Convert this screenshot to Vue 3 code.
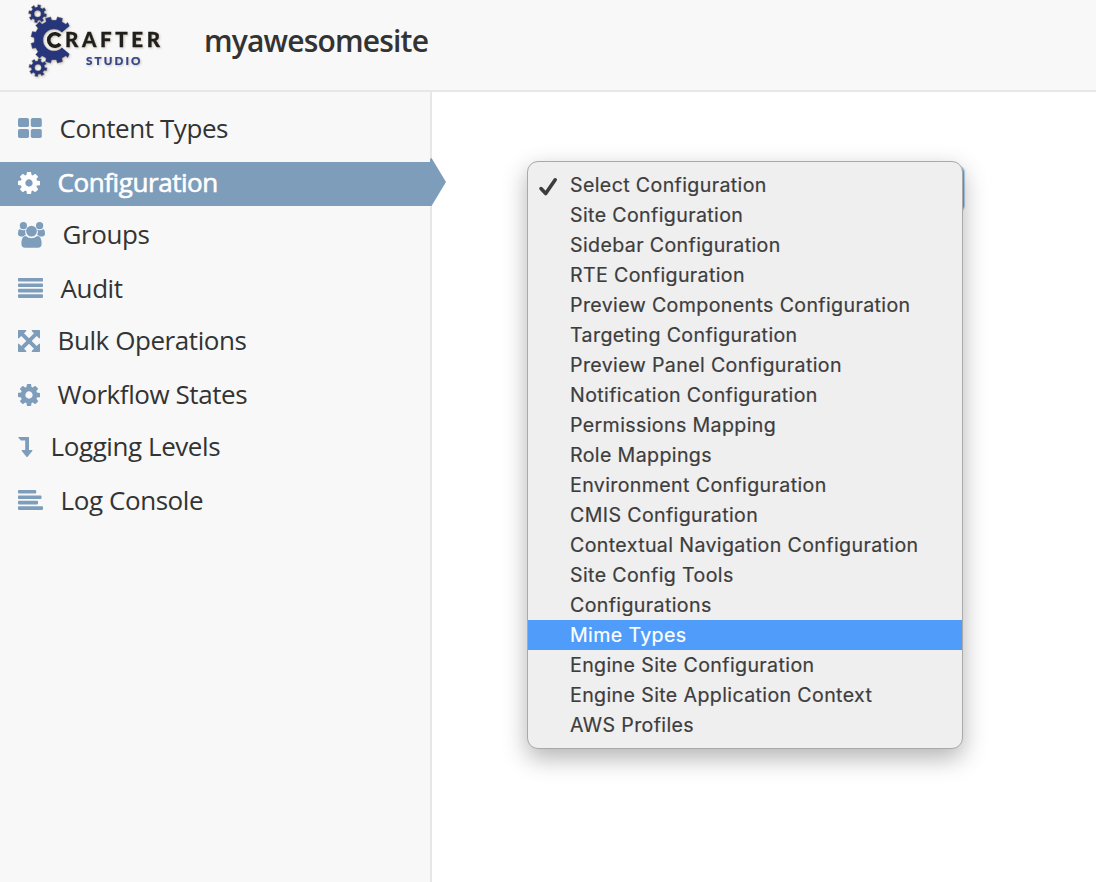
<script setup>
const nav = [
  { label: 'Content Types', icon: 'grid' },
  { label: 'Configuration', icon: 'cog', active: true },
  { label: 'Groups', icon: 'users' },
  { label: 'Audit', icon: 'lines' },
  { label: 'Bulk Operations', icon: 'arrows' },
  { label: 'Workflow States', icon: 'cog' },
  { label: 'Logging Levels', icon: 'down' },
  { label: 'Log Console', icon: 'left' }
]

const options = [
  'Select Configuration', 'Site Configuration', 'Sidebar Configuration', 'RTE Configuration',
  'Preview Components Configuration', 'Targeting Configuration', 'Preview Panel Configuration',
  'Notification Configuration', 'Permissions Mapping', 'Role Mappings', 'Environment Configuration',
  'CMIS Configuration', 'Contextual Navigation Configuration', 'Site Config Tools', 'Configurations',
  'Mime Types', 'Engine Site Configuration', 'Engine Site Application Context', 'AWS Profiles'
]

const cog = 'M1024 640q0-106-75-181t-181-75-181 75-75 181 75 181 181 75 181-75 75-181zm512-109v222q0 12-8 23t-20 13l-185 28q-19 54-39 91 35 50 107 138 10 12 10 25t-9 23q-27 37-99 108t-94 71q-12 0-26-9l-138-108q-44 23-91 38-16 136-29 186-7 28-36 28h-222q-14 0-24.5-8.5t-11.5-21.5l-28-184q-49-16-90-37l-141 107q-10 9-25 9-14 0-25-11-126-114-165-168-7-10-7-23 0-12 8-23 15-21 51-66.5t54-70.5q-27-50-41-99l-183-27q-13-2-21-12.5t-8-23.5v-222q0-12 8-23t19-13l186-28q14-46 39-92-40-57-107-138-10-12-10-24 0-10 9-23 26-36 98.5-107.5t94.5-71.5q13 0 26 10l138 107q44-23 91-38 16-136 29-186 7-28 36-28h222q14 0 24.5 8.5t11.5 21.5l28 184q49 16 90 37l142-107q9-9 24-9 13 0 25 10 129 119 165 170 7 8 7 22 0 12-8 23-15 21-51 66.5t-54 70.5q26 50 41 98l183 28q13 2 21 12.5t8 23.5z'

function gear(cx, cy, outer, inner, teeth, start, hole) {
  const step = (Math.PI * 2) / teeth
  const pts = []
  for (let i = 0; i < teeth; i++) {
    const a = start + i * step
    for (const [r, f] of [[inner, -0.29], [outer, -0.23], [outer, 0.23], [inner, 0.29]]) {
      pts.push(`${(cx + r * Math.cos(a + f * step)).toFixed(2)} ${(cy + r * Math.sin(a + f * step)).toFixed(2)}`)
    }
  }
  return `M${pts.join('L')}Z M${cx - hole} ${cy}a${hole} ${hole} 0 1 0 ${hole * 2} 0a${hole} ${hole} 0 1 0 ${-hole * 2} 0Z`
}
const gears = [
  gear(37.6, 13.8, 9.2, 6.9, 8, 0.2, 3.2),
  gear(38, 67.6, 9.2, 6.9, 8, 0.2, 3.2)
]
const bigGear = gear(54, 40, 23.4, 20, 12, Math.PI / 12, 10.8)
</script>

<template>
  <div class="page">
    <header class="header">
      <svg class="logo" width="180" height="88" viewBox="0 0 180 88">
        <defs>
          <clipPath id="opening"><path d="M28 14H64L69.5 26L60 34V46L69.5 54L64 66H28Z" /></clipPath>
        </defs>
        <g class="glow">
          <path v-for="g in gears" :key="g" :d="g" class="navy" fill-rule="evenodd" />
          <g clip-path="url(#opening)"><path :d="bigGear" class="navy" fill-rule="evenodd" /></g>
          <path class="letter-c" d="M60 36.2A6.3 6.3 0 1 0 60 43.8" />
          <text class="brand" x="65" y="47.2" textLength="95">RAFTER</text>
          <text class="studio" x="86" y="64.6" textLength="54.5">STUDIO</text>
        </g>
      </svg>
      <h1 class="site">myawesomesite</h1>
    </header>

    <div class="body">
      <nav class="sidebar">
        <a v-for="item in nav" :key="item.label" class="item" :class="{ active: item.active }">
          <svg v-if="item.icon === 'grid'" class="icon raised" width="24" height="22" viewBox="0 0 24 22">
            <rect x="0" y="1" width="11" height="9" rx="1.7" /><rect x="12.8" y="1" width="11" height="9" rx="1.7" />
            <rect x="0" y="12" width="11" height="9" rx="1.7" /><rect x="12.8" y="12" width="11" height="9" rx="1.7" />
          </svg>
          <svg v-else-if="item.icon === 'cog'" class="icon" width="22" height="22" viewBox="0 -128 1536 1536"><path :d="cog" /></svg>
          <svg v-else-if="item.icon === 'users'" class="icon" width="27" height="26" viewBox="0 0 27 26">
            <circle cx="5.4" cy="3.7" r="3.6" /><circle cx="21.6" cy="3.7" r="3.6" /><circle cx="13.5" cy="9.1" r="5.4" />
            <path d="M1.7 7.2Q5.2 9 7.6 7.8Q6.3 10.5 7.8 12.9Q6.3 13.2 5.1 14.4H2.7Q0 14.3 0 12.2Q0 7.2 1.7 7.2ZM25.3 7.2Q21.8 9 19.4 7.8Q20.7 10.5 19.2 12.9Q20.7 13.2 21.9 14.4H24.3Q27 14.3 27 12.2Q27 7.2 25.3 7.2Z" />
            <path d="M7.8 14Q13.5 18.4 19.2 14Q23.6 13.8 23.6 22Q23.6 25.7 19.8 25.7H7.2Q3.4 25.7 3.4 22Q3.4 13.8 7.8 14Z" />
          </svg>
          <svg v-else-if="item.icon === 'lines'" class="icon raised" width="25" height="22" viewBox="0 0 25 22">
            <rect x="0" y="1" width="25" height="3.6" rx=".8" /><rect x="0" y="6.4" width="25" height="3.6" rx=".8" />
            <rect x="0" y="11.8" width="25" height="3.6" rx=".8" /><rect x="0" y="17.3" width="25" height="3.6" rx=".8" />
          </svg>
          <svg v-else-if="item.icon === 'arrows'" class="icon" width="22" height="22" viewBox="0 0 22 22">
            <path d="M.7 0H7.8Q8.8.2 8.1 1.2L6 3.3L11 8.3L16 3.3L13.9 1.2Q13.2.2 14.2 0H21.3Q22 0 22 .7V7.8Q21.8 8.8 20.8 8.1L18.7 6L13.7 11L18.7 16L20.8 13.9Q21.8 13.2 22 14.2V21.3Q22 22 21.3 22H14.2Q13.2 21.8 13.9 20.8L16 18.7L11 13.7L6 18.7L8.1 20.8Q8.8 21.8 7.8 22H.7Q0 22 0 21.3V14.2Q.2 13.2 1.2 13.9L3.3 16L8.3 11L3.3 6L1.2 8.1Q.2 8.8 0 7.8V.7Q0 0 .7 0Z" />
          </svg>
          <svg v-else-if="item.icon === 'down'" class="icon" width="15" height="22" viewBox="0 0 15 22">
            <path d="M.5 1H10.5Q11 1 11 1.6V14H13.8Q15 14.2 14.3 15.1L9.6 20.7Q9 21.2 8.4 20.7L3.8 15.1Q3.2 14.2 4.2 14H7.2V4.6H3.2Q2.9 4.6 2.7 4.3L.2 1.6Q0 1 .5 1Z" />
          </svg>
          <svg v-else class="icon raised" width="25" height="22" viewBox="0 0 25 22">
            <rect x="0" y="1" width="18.2" height="3.6" rx=".8" /><rect x="0" y="6.4" width="23.5" height="3.6" rx=".8" />
            <rect x="0" y="11.8" width="20" height="3.6" rx=".8" /><rect x="0" y="17.3" width="25" height="3.6" rx=".8" />
          </svg>
          <span class="label">{{ item.label }}</span>
          <svg v-if="item.active" class="pointer" width="16" height="48" viewBox="0 0 16 48"><path d="M0 48V1L1.5 0L16 24L1.5 48Z" /></svg>
        </a>
      </nav>

      <main class="content">
        <div class="select">
          <ul class="menu">
            <li v-for="(o, i) in options" :key="o" :class="{ hover: o === 'Mime Types' }">
              <svg v-if="i === 0" class="check" width="20" height="20" viewBox="0 0 20 20"><path d="M3 11.6L7.7 16.5L17.2 2.8" /></svg>
              <span>{{ o }}</span>
            </li>
          </ul>
        </div>
      </main>
    </div>
  </div>
</template>

<style>
body { margin: 0; overflow: hidden; }
</style>

<style scoped>
.page { width: 1096px; height: 882px; display: flex; flex-direction: column; background: #fff; font-family: "Open Sans", "Noto Sans", sans-serif; color: #333; overflow: hidden; }
.header { box-sizing: border-box; height: 92px; display: flex; background: #f8f8f8; border-bottom: 2px solid #e7e7e7; }
.logo { flex: none; }
.glow { filter: drop-shadow(1px 1px .8px #cdc7ba); }
.navy { fill: #27367a; stroke: #a69b87; stroke-width: .4; }
.letter-c { fill: none; stroke: #211f1c; stroke-width: 3.6; }
.brand { font: 900 20.5px Lato, sans-serif; fill: #211f1c; stroke: #211f1c; stroke-width: .3; }
.studio { font: 900 11.6px Lato, sans-serif; fill: #36468a; stroke: #36468a; stroke-width: .2; }
.site { margin: 0 0 0 24px; font-size: 30px; line-height: 82px; font-weight: 600; letter-spacing: -.82px; }
.body { flex: 1; display: flex; }
.sidebar { box-sizing: border-box; width: 432px; padding-top: 16px; background: #f8f8f8; border-right: 2px solid #e7e7e7; }
.item { position: relative; display: flex; align-items: center; gap: 18px; box-sizing: border-box; height: 44px; padding: 0 0 2px 18px; margin-bottom: 8px; font-size: 26px; line-height: 40px; letter-spacing: -.43px; }
.item:nth-child(odd) { margin-bottom: 10px; }
.icon { flex: none; fill: #7e9dbb; }
.icon.raised { margin-top: -2px; }
.label { margin: -2px 0 0 -.4px; }
.active { background: #7e9dbb; color: #fff; -webkit-text-stroke: .6px #fff; }
.active .icon { fill: #fff; }
.pointer { position: absolute; left: 430px; top: -4px; fill: #7e9dbb; }
.content { flex: 1; padding: 75px 0 0 98px; }
.select { position: relative; box-sizing: border-box; width: 434px; height: 44px; border: 2px solid #5b9fe3; border-radius: 5px; box-shadow: 0 0 1px 1px #acd0f3; }
.menu { position: absolute; left: -5px; top: -8px; box-sizing: border-box; width: 436px; height: 588px; margin: 0; padding: 8px 0; list-style: none; background: #efefef; border: 1px solid #a9a9a9; border-radius: 11px; box-shadow: 0 9px 24px rgba(0, 0, 0, .3); font-family: Inter, Roboto, sans-serif; font-size: 19.6px; color: #3d3d3d; letter-spacing: .37px; -webkit-text-stroke: .2px currentColor; }
.menu li { position: relative; height: 30px; line-height: 30px; padding-left: 42px; white-space: nowrap; }
.menu .hover { background: #4f9cfa; color: #fff; }
.check { position: absolute; left: 10px; top: 7px; fill: none; stroke: #3d3d3d; stroke-width: 3.6; stroke-linecap: round; stroke-linejoin: round; }
</style>
